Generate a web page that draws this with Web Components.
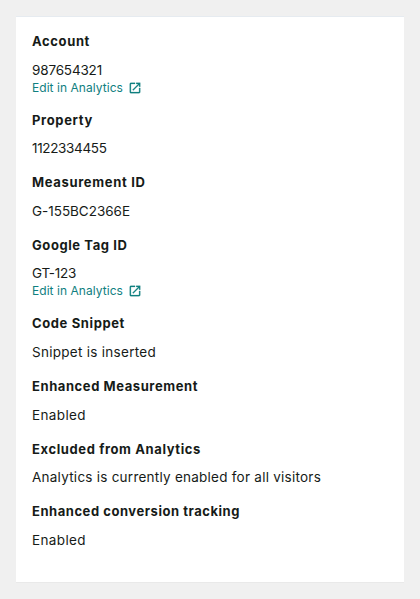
<!DOCTYPE html>
<html lang="en">
<head>
<meta charset="utf-8">
<title>Analytics settings</title>
<style>
html, body { margin: 0; height: 100%; background: #f0f0f0; }
</style>
</head>
<body>
<settings-card>
  <settings-item label="Account" label-width="58" value="987654321" value-width="70" link></settings-item>
  <settings-item label="Property" label-width="61" value="1122334455" value-width="74.5"></settings-item>
  <settings-item label="Measurement ID" label-width="113.5" value="G-155BC2366E" value-width="98"></settings-item>
  <settings-item label="Google Tag ID" label-width="95.5" value="GT-123" value-width="44" link></settings-item>
  <settings-item label="Code Snippet" label-width="93" value="Snippet is inserted" value-width="124"></settings-item>
  <settings-item label="Enhanced Measurement" label-width="166" value="Enabled" value-width="54"></settings-item>
  <settings-item label="Excluded from Analytics" label-width="169" value="Analytics is currently enabled for all visitors" value-width="289"></settings-item>
  <settings-item label="Enhanced conversion tracking" label-width="208" value="Enabled" value-width="54"></settings-item>
</settings-card>
<script>
// A line of text tracked out to a given width.
class TrackedText extends HTMLElement {
  connectedCallback() {
    const root = this.attachShadow({ mode: 'open' });
    root.innerHTML = `<style>:host{display:inline-block;white-space:nowrap}span{display:inline-block}</style><span></span>`;
    const span = root.querySelector('span');
    span.textContent = this.getAttribute('text');
    const target = parseFloat(this.getAttribute('width'));
    const natural = span.getBoundingClientRect().width;
    span.style.letterSpacing = ((target - natural) / span.textContent.length).toFixed(4) + 'px';
  }
}
customElements.define('tracked-text', TrackedText);

class ExternalLink extends HTMLElement {
  connectedCallback() {
    this.attachShadow({ mode: 'open' }).innerHTML = `
      <style>
        :host { display: flex; height: 16px; }
        a { display: flex; align-items: center; font-size: 12px; line-height: 16px; color: #108080; text-decoration: none; }
        svg { display: block; margin-left: 5px; }
      </style>
      <a href="#"><tracked-text text="Edit in Analytics" width="91"></tracked-text><svg width="14" height="14" viewBox="0 0 24 24" fill="currentColor" stroke="currentColor" stroke-width=".4"><path d="M19 19H5V5h7V3H5a2 2 0 0 0-2 2v14a2 2 0 0 0 2 2h14c1.1 0 2-.9 2-2v-7h-2v7zM14 3v2h3.59l-9.83 9.83 1.41 1.41L19 6.41V10h2V3h-7z"/></svg></a>`;
  }
}
customElements.define('external-link', ExternalLink);

class SettingsItem extends HTMLElement {
  connectedCallback() {
    const a = n => this.getAttribute(n);
    this.attachShadow({ mode: 'open' }).innerHTML = `
      <style>
        :host { display: block; }
        h5, p { margin: 0; height: 20px; line-height: 20px; }
        h5 { font-size: 13px; font-weight: 700; margin-bottom: 8.67px; }
        p { font-size: 13.5px; font-weight: 400; }
      </style>
      <h5><tracked-text text="${a('label')}" width="${a('label-width')}"></tracked-text></h5>
      <p><tracked-text text="${a('value')}" width="${a('value-width')}"></tracked-text></p>
      ${this.hasAttribute('link') ? '<external-link></external-link>' : ''}`;
  }
}

class SettingsCard extends HTMLElement {
  connectedCallback() {
    this.attachShadow({ mode: 'open' }).innerHTML = `
      <style>
        :host { display: block; padding: 16px; }
        section { box-sizing: border-box; height: 567px; padding: 13.91px 16px; background: #fff;
          border-top: 1px solid #e6ebf0; border-bottom: 1px solid #e9e9e9;
          display: flex; flex-direction: column; gap: 13.96px;
          color: #161b18; font-family: Inter, sans-serif; }
      </style>
      <section><slot></slot></section>`;
  }
}
customElements.define('settings-card', SettingsCard);
customElements.define('settings-item', SettingsItem);
</script>
</body>
</html>
